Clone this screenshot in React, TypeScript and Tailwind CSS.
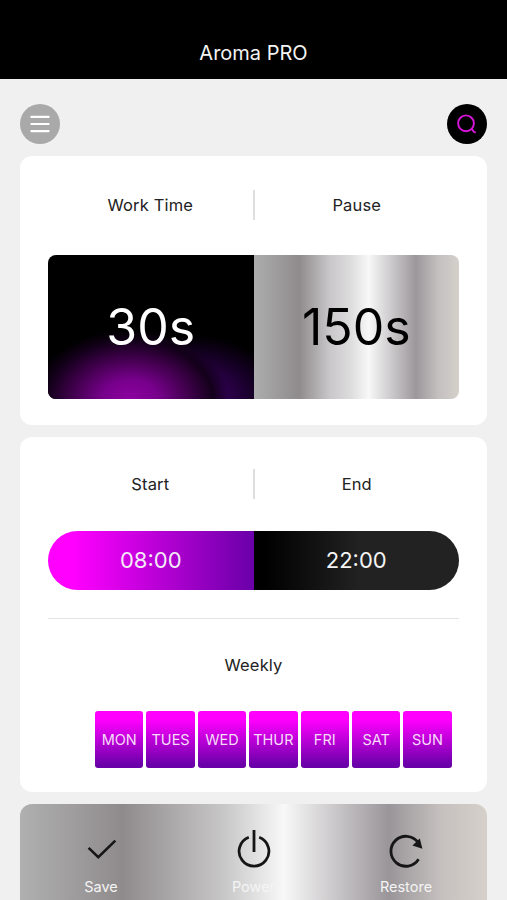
// src/App.tsx

import type { ReactNode } from "react";

const days = ["MON", "TUES", "WED", "THUR", "FRI", "SAT", "SUN"];

function MenuIcon() {
	return (
		<svg width="40" height="40" viewBox="0 0 40 40" stroke="#fff" strokeWidth="2.2" strokeLinecap="round">
			<path d="M11.4 12.9h17.2M11.4 20h17.2M11.4 27.1h17.2" />
		</svg>
	);
}

function SearchIcon() {
	return (
		<svg width="40" height="40" viewBox="0 0 40 40" fill="none" stroke="#d915dc" strokeWidth="1.9">
			<circle cx="19" cy="19.3" r="7.9" />
			<path d="M24.6 24.6l2.2 3.2 1.9.9" />
		</svg>
	);
}

function SaveIcon() {
	return (
		<svg width="40" height="40" viewBox="0 0 40 40" fill="none" stroke="#161616" strokeWidth="2.6">
			<path d="M7.6 17.9l9.7 9.3 17-16.6" />
		</svg>
	);
}

function PowerIcon() {
	return (
		<svg width="40" height="40" viewBox="0 0 40 40" fill="none" stroke="#161616" strokeWidth="2.8">
			<path d="M14.8 7.3a14.9 14.9 0 1 0 10.4 0M20 -0.5v22.5" />
		</svg>
	);
}

function RestoreIcon() {
	return (
		<svg width="40" height="40" viewBox="0 0 40 40" fill="none" stroke="#161616" strokeWidth="2.8">
			<path d="M32.6 29.3a15 15 0 1 1 -0.6 -17" />
			<path d="M26.4 15.6l7.4-7.2 2.6 10.4z" fill="#161616" stroke="none" />
		</svg>
	);
}

function ColumnTitles({ left, right, className }: { left: string; right: string; className: string }) {
	return (
		<div className={`flex h-[30px] items-center text-center text-[16.5px] tracking-[0.15px] text-[#222] ${className}`}>
			<span className="flex-1">{left}</span>
			<span className="h-full w-[2px] bg-[#dedede]" />
			<span className="flex-1">{right}</span>
		</div>
	);
}

function ActionButton({ label, className, children }: { label: string; className: string; children: ReactNode }) {
	return (
		<button className={`flex w-[60px] flex-col items-center ${className}`}>
			{children}
			<span className="mt-[7px] text-[14.5px] leading-5 text-[#f4f4f4]">{label}</span>
		</button>
	);
}

function WorkCard() {
	return (
		<section className="h-[269px] rounded-xl bg-white px-7 pt-[34px]">
			<ColumnTitles left="Work Time" right="Pause" className="" />
			<div className="mt-[35px] flex h-[144px] overflow-hidden rounded-lg text-[50px]">
				<div className="flex flex-1 items-center justify-center bg-black bg-[radial-gradient(ellipse_48%_48%_at_40%_100%,#8c009f_0%,#77008c_28%,#42004e_58%,#13001a_84%,transparent_100%),radial-gradient(ellipse_44%_44%_at_70%_100%,#48007c,transparent)] text-white">
					30s
				</div>
				<div className="flex flex-1 items-center justify-center bg-[linear-gradient(90deg,#adadad_0%,#8f8b8d_22%,#c9c7c9_37%,#dddcdd_47%,#f8f8f8_56%,#9c979b_79%,#c4c0bf_90%,#d5d0cb_100%)] text-black">
					150s
				</div>
			</div>
		</section>
	);
}

function ScheduleCard() {
	return (
		<section className="mt-3 h-[355px] rounded-xl bg-white px-7 pt-[32px]">
			<ColumnTitles left="Start" right="End" className="" />
			<div className="mt-8 flex h-[59px] overflow-hidden rounded-full text-[22px] text-[#f4e8f7]">
				<div className="flex flex-1 items-center justify-center bg-[linear-gradient(90deg,#ff00ff_12%,#6900a8_100%)]">
					08:00
				</div>
				<div className="flex flex-1 items-center justify-center bg-[linear-gradient(90deg,#000_5%,#222_52%)] text-[#f4f4f4]">
					22:00
				</div>
			</div>
			<div className="mt-7 h-px bg-[#e4e4e4]" />
			<p className="mt-[34px] text-center text-[16.5px] leading-6 tracking-[0.15px] text-[#222]">Weekly</p>
			<div className="mt-[34px] ml-[47px] flex gap-[3px]">
				{days.map((day) => (
					<div
						key={day}
						className="flex h-[57px] w-[48.4px] shrink-0 items-center justify-center rounded-[3px] bg-[linear-gradient(180deg,#ff00ff_15%,#6900a8_95%)] text-[14.5px] text-[#f6dcf9]"
					>
						{day}
					</div>
				))}
			</div>
		</section>
	);
}

function App() {
	return (
		<div className="h-screen overflow-hidden bg-[#f0f0f0] font-[Inter,sans-serif]">
			<header className="flex h-[79px] justify-center bg-black pt-[38px] text-[20px] leading-[30px] text-[#f4f4f4]">
				<h1>Aroma PRO</h1>
			</header>

			<main className="px-5">
				<div className="flex h-[77px] justify-between pt-[25px]">
					<button className="size-10 rounded-full bg-[#a9a9a9]">
						<MenuIcon />
					</button>
					<button className="size-10 rounded-full bg-black">
						<SearchIcon />
					</button>
				</div>

				<WorkCard />
				<ScheduleCard />

				<footer className="mt-3 flex h-[130px] justify-between rounded-t-xl bg-[linear-gradient(90deg,#b0b0b0_0%,#8f8b8c_22%,#c9c8c9_44%,#f8f8f8_56.5%,#9a9599_79%,#c5c0be_90%,#d5d0ca_100%)] px-[51px] pt-[26px]">
					<ActionButton label="Save" className="">
						<SaveIcon />
					</ActionButton>
					<ActionButton label="Power" className="">
						<PowerIcon />
					</ActionButton>
					<ActionButton label="Restore" className="">
						<RestoreIcon />
					</ActionButton>
				</footer>
			</main>
		</div>
	);
}

export default App;
